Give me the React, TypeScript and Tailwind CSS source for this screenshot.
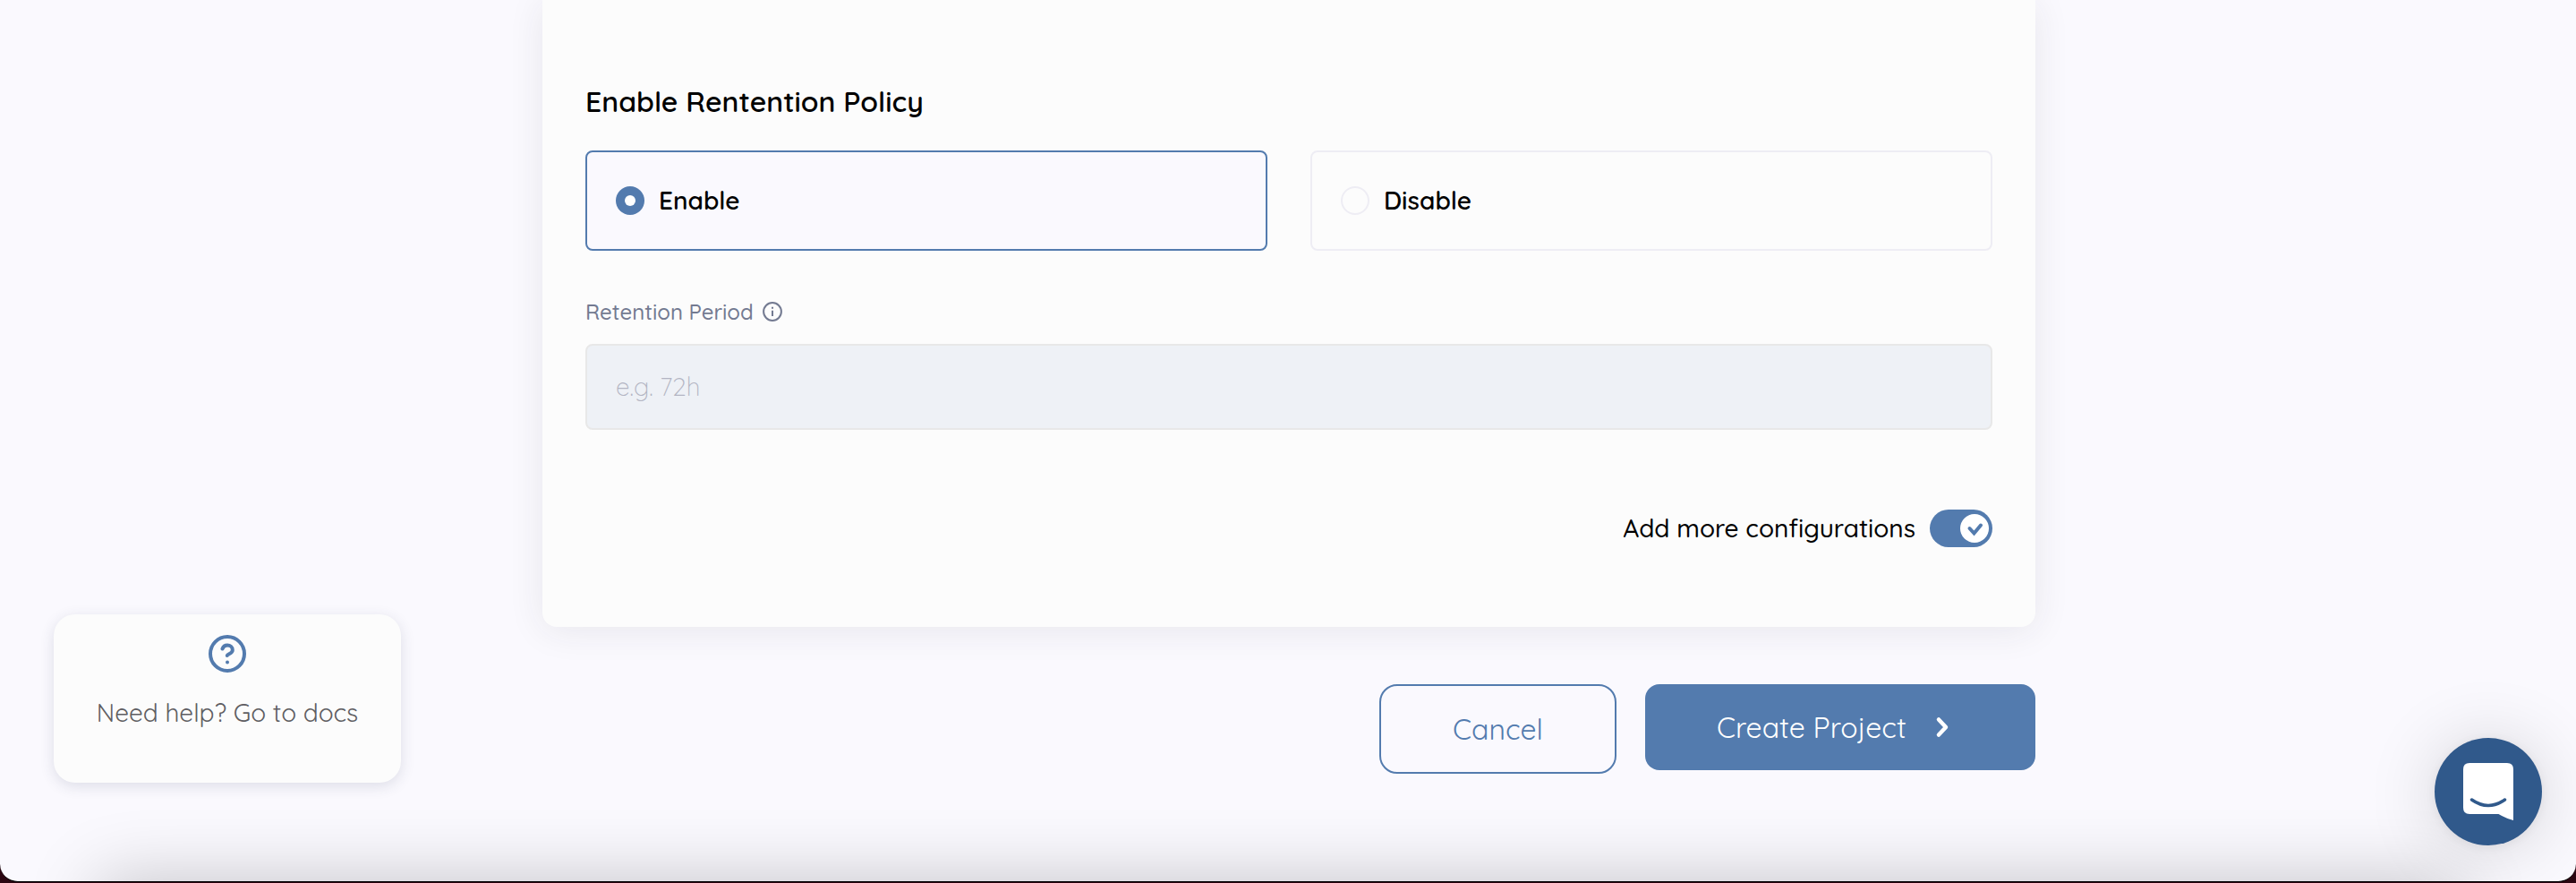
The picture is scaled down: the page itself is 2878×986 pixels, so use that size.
import React from "react";

const font = "font-['Quicksand','Lato',sans-serif]";

function Option({ label, checked = false }: { label: string; checked?: boolean }) {
  return (
    <label
      className={
        "flex h-28 flex-1 items-center rounded-lg border-2 pl-8 " +
        (checked ? "border-[#537bae] bg-[#faf9fe]" : "border-[#eeedf4]")
      }
    >
      <span
        className={
          "flex size-8 items-center justify-center rounded-full " +
          (checked ? "bg-[#537bae]" : "border-2 border-[#eeedf4]")
        }
      >
        {checked && <span className="size-3 rounded-full bg-white" />}
      </span>
      <span className="ml-4 text-[28px] leading-8 font-semibold text-black">{label}</span>
    </label>
  );
}

export default function App() {
  return (
    <div className={"h-[986px] w-[2878px] overflow-hidden bg-[#2b0611] " + font}>
      <div className="relative h-[985px] overflow-hidden rounded-b-[20px] border-b border-black bg-[#faf9fe]">
        <div className="flex h-[984px]">
          <aside className="flex w-[606px] shrink-0 items-end pb-[110px] pl-[60px]">
            <a className="flex h-[188px] w-[388px] flex-col items-center rounded-3xl bg-[#fcfcfc] pt-[23px] shadow-[0_4px_16px_rgba(50,60,93,0.14)]">
              <svg className="size-[42px]" viewBox="0 0 42 42" fill="none" stroke="#537bae" strokeWidth="4" strokeLinecap="round" strokeLinejoin="round">
                <circle cx="21" cy="21" r="19" />
                <path d="M15.5 15.5c.9-2.6 3-3.9 5.5-3.9 3.300 0 5.800 2.200 5.800 5.300 0 3.900-5.800 4.300-6 6.100" />
                <circle cx="21" cy="30.500" r="2" fill="#537bae" stroke="none" />
              </svg>
              <span className="mt-[27px] text-[28px] leading-9 whitespace-nowrap text-[#5f5e62]">Need help? Go to docs</span>
            </a>
          </aside>
          <main className="w-[1668px] shrink-0">
            <section className="h-[700px] rounded-b-2xl bg-[#fcfcfc] px-12 pt-[93px] shadow-[0_4px_40px_rgba(40,40,60,0.09)]">
              <h2 className="h-[75px] text-[32px] leading-10 font-semibold text-black">
                <span>Enable Rentention Policy</span>
              </h2>
              <div className="flex gap-12">
                <Option label="Enable" checked />
                <Option label="Disable" />
              </div>
              <div className="mt-[52px] flex h-8 items-center text-[24px] leading-8 font-medium text-[#737a91]">
                <span>Retention Period</span>
                <svg className="ml-[10px] size-[22px]" viewBox="0 0 22 22" fill="none" stroke="#737a91" strokeWidth="2">
                  <circle cx="11" cy="11" r="9.900" />
                  <path d="M11 9.700v6.300M11 5.700v2" />
                </svg>
              </div>
              <div className="mt-5 flex h-24 items-center rounded-lg border-2 border-[#e8e8e8] bg-[#eef1f6] pl-8 text-[28px] font-light text-[#b3b5c3]">
                <span>e.g. 72h</span>
              </div>
              <div className="mt-[89px] flex h-[42px] items-center justify-end">
                <span className="text-[28px] font-medium text-black">Add more configurations</span>
                <span className="ml-4 flex h-[42px] w-[70px] items-center justify-end rounded-full bg-[#537bae] pr-1">
                  <span className="flex size-8 items-center justify-center rounded-full bg-white">
                    <svg className="size-8" viewBox="0 0 32 32" fill="none" stroke="#537bae" strokeWidth="4" strokeLinecap="round">
                      <path d="M10.500 16l5 5.500L23 12.500" />
                    </svg>
                  </span>
                </span>
              </div>
            </section>
            <div className="flex items-start justify-end gap-8 pt-16">
              <button className="flex h-[100px] w-[265px] items-center justify-center rounded-[20px] border-2 border-[#537bae] text-[32px] text-[#537bae]">
                <span>Cancel</span>
              </button>
              <button className="flex h-24 w-[436px] items-center rounded-2xl bg-[#537bae] pl-20 text-[32px] text-white">
                <span>Create Project</span>
                <svg className="ml-8 h-[26px] w-[18px]" viewBox="0 0 18 26" fill="none" stroke="white" strokeWidth="4.500" strokeLinecap="round" strokeLinejoin="round">
                  <path d="M4 4.500l8 8.500-8 8.500" />
                </svg>
              </button>
            </div>
          </main>
        </div>
        <div className="pointer-events-none absolute top-[984px] right-[130px] left-[110px] h-40 shadow-[0_0_80px_rgba(0,0,0,0.225)]" />
        <button className="absolute top-[824px] left-[2720px] flex size-[120px] items-center justify-center rounded-full bg-[#30598b] shadow-[0_2px_12px_rgba(0,0,0,0.06),0_4px_80px_rgba(0,0,0,0.16)]">
          <svg className="h-16 w-14" viewBox="0 0 56 64">
            <path fill="white" d="M7 0h42q7 0 7 7v57q-9-2.500-16.500-7H7q-7 0-7-7V7q0-7 7-7z" />
            <path d="M9.500 41q18.500 13 37 0" fill="none" stroke="#30598b" strokeWidth="3.500" strokeLinecap="round" />
          </svg>
        </button>
      </div>
    </div>
  );
}
